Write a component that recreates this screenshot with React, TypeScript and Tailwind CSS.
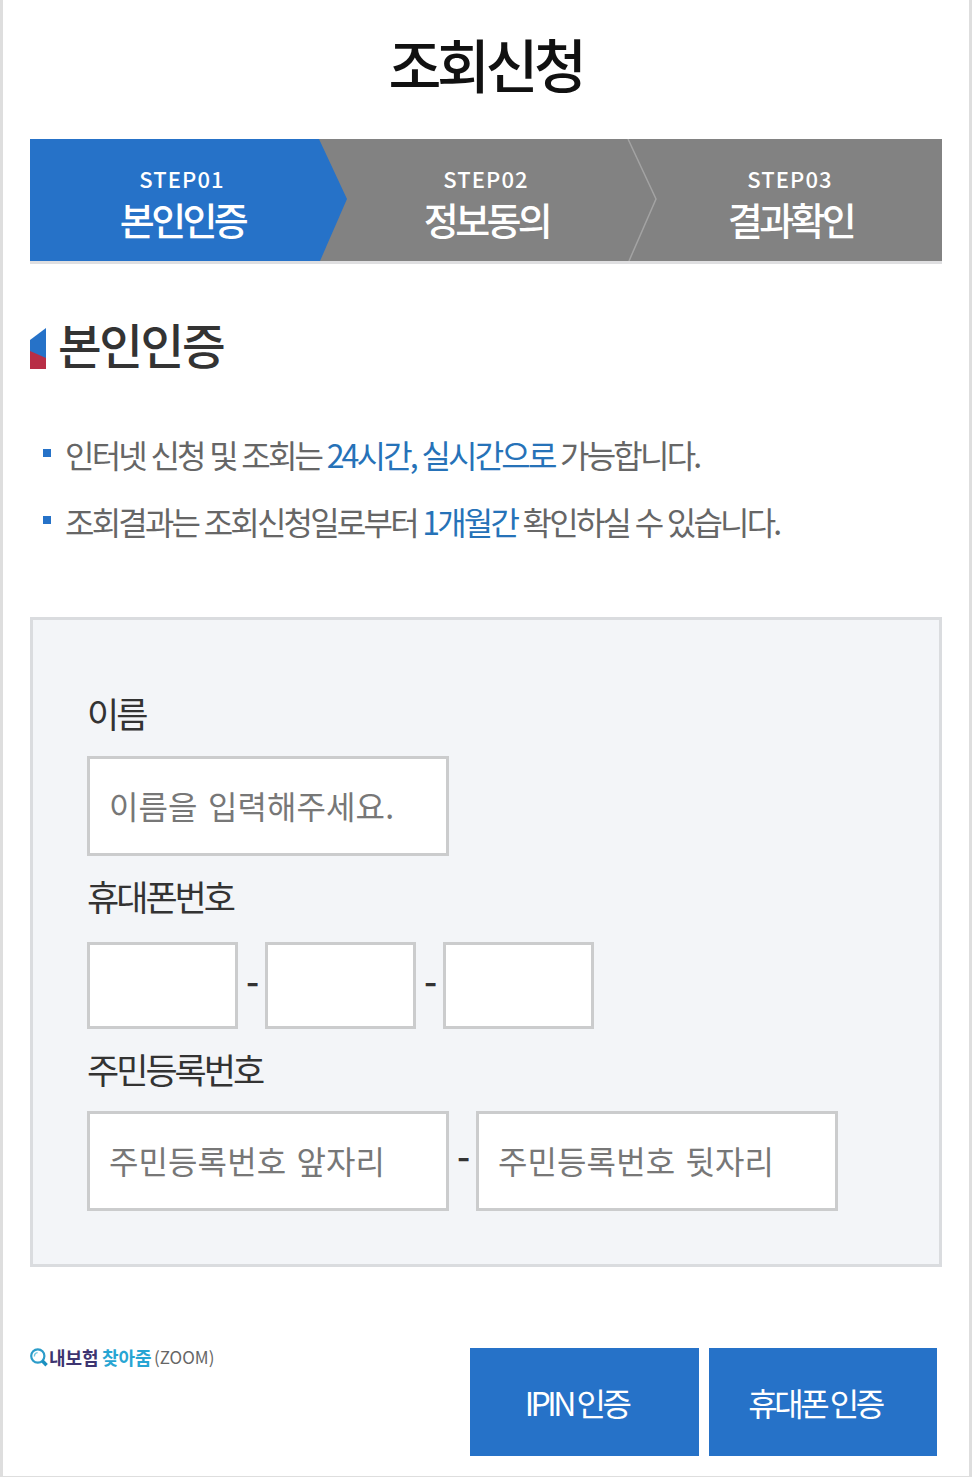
import type { ReactNode } from 'react';

const steps = [
  { code: 'STEP01', name: '본인인증' },
  { code: 'STEP02', name: '정보동의' },
  { code: 'STEP03', name: '결과확인' },
];

function StepBar() {
  return (
    <ol className="relative grid h-[125px] grid-cols-3 border-b-[3px] border-[#dfdfe1] bg-[#828282] text-white">
      <svg className="absolute left-0 top-0" width="912" height="122" viewBox="0 0 912 122" aria-hidden="true">
        <path d="M0 0H289L317 60L290 122H0Z" fill="#2672c8" />
        <path d="M598 0L626 60L599 122" fill="none" stroke="#a3a3a3" strokeWidth="1.5" />
      </svg>
      {steps.map((step) => (
        <li key={step.code} className="relative flex flex-col items-center pt-[24px]">
          <span className="h-[31px] text-[22px] font-medium leading-[31px] tracking-[1.1px]">{step.code}</span>
          <span className="h-[50px] pl-[1px] text-[38px] font-medium leading-[50px] tracking-[-3.6px]">{step.name}</span>
        </li>
      ))}
    </ol>
  );
}

function Notice({ children }: { children: ReactNode }) {
  return (
    <li className="flex h-[67px] items-center whitespace-nowrap text-[32px] leading-[67px] tracking-[-2.8px] text-[#666] [word-spacing:1.1px]">
      <span className="mb-[3px] ml-[13px] mr-[14px] size-[8px] bg-[#2672c8]" />
      <span>{children}</span>
    </li>
  );
}

function Label({ children }: { children: ReactNode }) {
  return <label className="block text-[35px] leading-[50px] tracking-[-3px] text-[#333]">{children}</label>;
}

function Field({ placeholder }: { placeholder: string }) {
  return (
    <input
      placeholder={placeholder}
      className="h-[100px] w-[362px] border-[3px] border-[#cbcccd] bg-white pb-[3px] pl-[19px] text-[32px] tracking-[0.1px] [word-spacing:3px] placeholder:text-[#777] placeholder:opacity-100"
    />
  );
}

function PhoneField() {
  return <input className="h-[87px] w-[151px] border-[3px] border-[#cbcccd] bg-white px-4 text-[32px]" />;
}

function Dash() {
  return (
    <span className="mb-[14px] flex w-[27px] justify-center pl-[2px] text-[37px] font-medium leading-[50px] text-[#333]">
      -
    </span>
  );
}

export default function App() {
  return (
    <main className="h-[1477px] w-[972px] border-x-[3px] border-b border-[#dedede] bg-white px-[27px] font-['Noto_Sans_CJK_KR','Noto_Sans',sans-serif]">
      <h1 className="h-[139px] pr-[1px] pt-[23px] text-center text-[57.5px] font-medium leading-[80px] tracking-[-4.4px] text-[#111]">
        조회신청
      </h1>
      <StepBar />

      <h2 className="mt-[50px] flex h-[60px] items-center text-[47.5px] font-medium leading-[60px] tracking-[-2.4px] text-[#333]">
        <svg className="mr-[12px] mt-[9px]" width="16" height="41" viewBox="0 0 16 41" aria-hidden="true">
          <path d="M0 12L16 0V41H0Z" fill="#2672c8" />
          <path d="M0 23L16 30V41H0Z" fill="#b82e46" />
        </svg>
        본인인증
      </h2>

      <ul className="mt-[47px]">
        <Notice>
          인터넷 신청 및 조회는 <span className="text-[#2672b8]">24시간, 실시간으로</span> 가능합니다.
        </Notice>
        <Notice>
          조회결과는 조회신청일로부터 <span className="text-[#2672b8]">1개월간</span> 확인하실 수 있습니다.
        </Notice>
      </ul>

      <section className="mt-[62px] h-[650px] border-[3px] border-[#dadcdf] bg-[#f3f5f8] pl-[54px] pt-[68px]">
        <Label>이름</Label>
        <div className="mt-[18px] flex">
          <Field placeholder="이름을 입력해주세요." />
        </div>
        <div className="mt-[15px]">
          <Label>휴대폰번호</Label>
        </div>
        <div className="mt-[21px] flex items-center">
          <PhoneField />
          <Dash />
          <PhoneField />
          <Dash />
          <PhoneField />
        </div>
        <div className="mt-[15px]">
          <Label>주민등록번호</Label>
        </div>
        <div className="mt-[17px] flex items-center">
          <Field placeholder="주민등록번호 앞자리" />
          <Dash />
          <Field placeholder="주민등록번호 뒷자리" />
        </div>
      </section>

      <footer className="mt-[81px] flex justify-between pr-[5px]">
        <div className="-mt-px flex h-[20px] items-center whitespace-nowrap leading-[20px]">
          <svg className="mt-px" width="18" height="19" viewBox="0 0 18 19" fill="none" aria-hidden="true">
            <circle cx="7.8" cy="8" r="6.6" stroke="#2b9cc9" strokeWidth="2.2" />
            <path d="M4.4 8.4C4.4 6 5.6 4.8 7.6 4.6" stroke="#6cc5e0" strokeWidth="1.4" />
            <path d="M12.2 12.8L16.6 17.3" stroke="#1a90c0" strokeWidth="3.4" />
          </svg>
          <span className="ml-px w-[49px] text-[18px] font-bold text-[#3d3470]">내보험</span>
          <span className="ml-[4px] w-[50px] text-[18px] font-bold text-[#27a5d3]">찾아줌</span>
          <span className="ml-[2px] text-[17px] text-[#666]">(ZOOM)</span>
        </div>
        <div className="flex gap-[10px]">
          <button className="h-[108px] w-[229px] bg-[#2672c8] pr-[16px] text-[32px] tracking-[-3.5px] text-white">
            IPIN 인증
          </button>
          <button className="h-[108px] w-[228px] bg-[#2672c8] pr-[16px] text-[32px] tracking-[-3.5px] text-white">
            휴대폰 인증
          </button>
        </div>
      </footer>
    </main>
  );
}
